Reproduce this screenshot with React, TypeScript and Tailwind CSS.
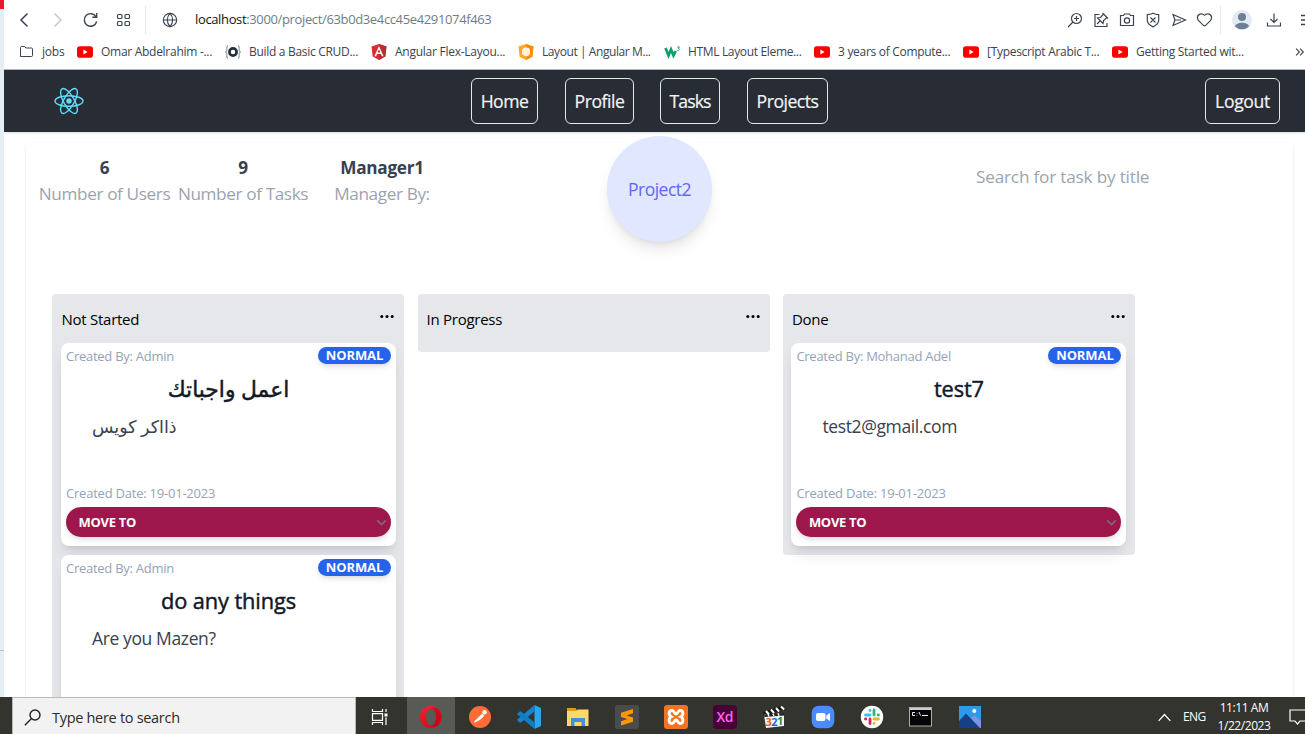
import type { ReactNode } from "react";
import { Heart, Globe } from "lucide-react";

function Line({ children, size = 18, w = 1.2, color = "#3b4450" }: { children: ReactNode; size?: number; w?: number; color?: string }) {
  return (
    <svg width={size} height={size} viewBox="0 0 18 18" fill="none" stroke={color} strokeWidth={w} className="shrink-0">
      {children}
    </svg>
  );
}

function YouTube() {
  return (
    <svg width="16" height="16" viewBox="0 0 16 16">
      <rect y="2.3" width="16" height="11.4" rx="2.8" fill="#f00" />
      <path d="M6.4 5.6v4.8l4.2-2.4z" fill="#fff" />
    </svg>
  );
}

function Folder() {
  return (
    <svg width="13" height="12" viewBox="0 0 13 12" fill="none" stroke="#3b4450">
      <path d="M.5 10.500V1.500c0-.6.4-1 1-1h3.200l1.300 1.500h5.500c.6 0 1 .4 1 1v6.500c0 .6-.4 1-1 1z" />
    </svg>
  );
}

function Loopback() {
  return (
    <svg width="16" height="16" viewBox="0 0 16 16" fill="none">
      <path d="M3 1.500C1.500 1.500 2 4 1.800 6c0 1.300-.6 2-1.500 2 .9 0 1.500.7 1.500 2 .2 2-.3 4.500 1.200 4.500M13 1.500c1.500 0 1 2.500 1.200 4.500 0 1.300.6 2 1.500 2-.9 0-1.500.7-1.500 2-.2 2 .3 4.500-1.200 4.500" stroke="#7b8791" strokeWidth="1" />
      <circle cx="8" cy="8" r="3.600" stroke="#22303c" strokeWidth="2.700" />
    </svg>
  );
}

function Angular() {
  return (
    <svg width="16" height="16" viewBox="0 0 16 16">
      <path d="M8 0l7.500 2.600-1.200 10L8 16l-6.300-3.400-1.200-10z" fill="#dd2b35" />
      <path d="M8 0l7.500 2.600-1.200 10L8 16z" fill="#b52e31" />
      <path d="M8 2l4.600 10.200h-1.700l-.9-2.300H6l-.9 2.300H3.400zm0 3.200L6.600 8.500h2.800z" fill="#fff" />
    </svg>
  );
}

function Material() {
  return (
    <svg width="16" height="16" viewBox="0 0 16 16">
      <path d="M8 0l7.500 2.500-1.100 10.300L8 16l-6.400-3.200L.5 2.500z" fill="#ffa726" />
      <path d="M8 0l7.500 2.500-1.100 10.300L8 16z" fill="#fb8c00" />
      <path d="M8 3.200l3 1L12 6v4l-2 2-2 .500-3-1.500-1-1V6l1.500-2z" fill="#fff3df" />
    </svg>
  );
}

function W3() {
  return (
    <svg width="17" height="16" viewBox="0 0 17 16" fill="none">
      <path d="M1.500 4l3 7.500L7 5.500l2.500 6 2.200-4.500" stroke="#0f9d6c" strokeWidth="2.700" />
      <path d="M13 3h2.500l-1.300 1.500c2 0 1.500 2.500-.9 1.800" stroke="#0f9d6c" strokeWidth=".9" />
    </svg>
  );
}

const bookmarks: { icon: ReactNode; label: string; cls: string; ls: string }[] = [
  { icon: <Folder />, label: "jobs", cls: "w-[57px] gap-[9px]", ls: "tracking-[-0.200px]" },
  { icon: <YouTube />, label: "Omar Abdelrahim -...", cls: "w-[148px] gap-2", ls: "tracking-[-0.280px]" },
  { icon: <Loopback />, label: "Build a Basic CRUD...", cls: "w-[146px] gap-2", ls: "tracking-[-0.300px]" },
  { icon: <Angular />, label: "Angular Flex-Layou...", cls: "w-[147px] gap-2", ls: "tracking-[-0.260px]" },
  { icon: <Material />, label: "Layout | Angular M...", cls: "w-[146px] gap-2", ls: "tracking-[-0.420px]" },
  { icon: <W3 />, label: "HTML Layout Eleme...", cls: "w-[150px] gap-[7px]", ls: "tracking-[-0.340px]" },
  { icon: <YouTube />, label: "3 years of Compute...", cls: "w-[149px] gap-2", ls: "tracking-[-0.300px]" },
  { icon: <YouTube />, label: "[Typescript Arabic T...", cls: "w-[149px] gap-2", ls: "tracking-[-0.300px]" },
  { icon: <YouTube />, label: "Getting Started wit...", cls: "w-[183px] gap-2", ls: "tracking-[-0.280px]" },
];

function AddressBar() {
  return (
    <div className="flex h-[38px] shrink-0 items-center pl-[11px] pt-px">
      <div className="flex w-[122px] shrink-0 items-center gap-[15px]">
        <Line w={1.500}><path d="M12.500 2.500L6 9l6.500 6.500" /></Line>
        <Line w={1.500} color="#c5c8cb"><path d="M6.500 2.500L13 9l-6.500 6.500" /></Line>
        <Line w={1.400}><path d="M15.200 6A6.300 6.300 0 1 0 15.700 10.500M15.700 2v4.300h-4.300" /></Line>
        <Line w={1.200}>
          <rect x="3.500" y="3.500" width="4.500" height="4" rx="1" />
          <rect x="11" y="3.500" width="4.500" height="4" rx="1" />
          <rect x="3.500" y="10.500" width="4.500" height="4" rx="1" />
          <rect x="11" y="10.500" width="4.500" height="4" rx="1" />
        </Line>
      </div>
      <div className="ml-[8px] h-7 w-px shrink-0 bg-[#e4e6e8]" />
      <Globe size={16} strokeWidth={1.700} className="ml-[16px] shrink-0 text-[#3b4450]" />
      <div className="ml-[17px] w-[871px] shrink-0 whitespace-nowrap text-[13px] tracking-[-0.360px] text-[#6f7c89]">
        <span className="text-[#111]">localhost</span>:3000/project/63b0d3e4cc45e4291074f463
      </div>
      <div className="flex shrink-0 items-center gap-[8px]">
        <Line><circle cx="10.500" cy="7.500" r="5" /><path d="M10.500 5v5M8 7.500h5M7 11l-5 5" /></Line>
        <Line><path d="M7.500 3.500H3v12h12V12M10.500 2l5.500 5.500M11.500 3L8.500 6.500l-3 .5 5.500 5.500.5-3L15 6.500M8 10l-3 3" /></Line>
        <Line><path d="M2.500 4.500h3l1-1.500h5l1 1.500h3v10h-13z" /><circle cx="9" cy="9.500" r="2.600" /></Line>
        <Line><path d="M9 2.300c2 1.200 4 1.400 5.700 1.400v5.800c0 3-3 5-5.700 6.400C6.300 14.500 3.300 12.500 3.300 9.500V3.700C5 3.700 7 3.500 9 2.300zM6.500 6.500l5 5M11.500 6.500l-5 5" /></Line>
        <Line><path d="M3 3.500L15.500 9 3 14.500 5 9zM5 9h6" /></Line>
        <Heart size={17} strokeWidth={1.700} className="text-[#3b4450]" />
      </div>
      <div className="ml-[7px] h-7 w-px shrink-0 bg-[#e4e6e8]" />
      <svg width="20" height="20" viewBox="0 0 20 20" className="ml-[11px] shrink-0">
        <circle cx="10" cy="10" r="10" fill="#e2ebf3" />
        <circle cx="10" cy="7" r="4" fill="#6d7f94" />
        <path d="M3 16.500c1-5 13-5 14 0A10 10 0 0 1 3 16.500z" fill="#6d7f94" />
      </svg>
      <div className="ml-[13px] flex shrink-0 gap-[16px]">
        <Line><path d="M9 2.500v9M5.500 8L9 11.500 12.500 8M2.500 11.500v3.500h13v-3.500" /></Line>
        <Line w={1.500}><path d="M2 4.500h13M2 9h13M2 13.500h13" /></Line>
      </div>
    </div>
  );
}

function BookmarkBar() {
  return (
    <div className="flex h-[32px] shrink-0 items-center border-b border-[#b3bac0] pb-[3px] pl-[16px] pr-px text-[12px] text-[#3b4450]">
      {bookmarks.map((b) => (
        <div key={b.label} className={`flex shrink-0 items-center whitespace-nowrap ${b.cls}`}>
          {b.icon}
          <span className={b.ls}>{b.label}</span>
        </div>
      ))}
      <Line size={10} w={2}><path d="M2 3l6 6-6 6M9 3l6 6-6 6" /></Line>
    </div>
  );
}

function NavButton({ label, cls }: { label: string; cls: string }) {
  return (
    <button className={`h-[46px] shrink-0 whitespace-nowrap rounded-[6px] border border-[#e5e7eb] pt-px text-center text-[17.600px] font-medium text-[#f3f4f6] [-webkit-text-stroke:0.200px_#f3f4f6] ${cls}`}>
      {label}
    </button>
  );
}

function Navbar() {
  return (
    <nav className="z-10 flex h-[62px] shrink-0 items-center bg-[#282c34] pl-[50px] shadow-sm">
      <svg width="30" height="28" viewBox="0 0 30 28" fill="none" stroke="#61dafb" strokeWidth="1.400">
        <circle cx="15" cy="14" r="2.700" fill="#61dafb" stroke="none" />
        <ellipse cx="15" cy="14" rx="14" ry="5.300" />
        <ellipse cx="15" cy="14" rx="14" ry="5.300" transform="rotate(60 15 14)" />
        <ellipse cx="15" cy="14" rx="14" ry="5.300" transform="rotate(120 15 14)" />
      </svg>
      <NavButton label="Home" cls="ml-[387px] w-[67px] tracking-[-0.500px]" />
      <NavButton label="Profile" cls="ml-[27px] w-[69px] tracking-[-0.450px]" />
      <NavButton label="Tasks" cls="ml-[26px] w-[60px] tracking-[-0.850px]" />
      <NavButton label="Projects" cls="ml-[27px] w-[81px] tracking-[-0.500px]" />
      <NavButton label="Logout" cls="ml-[377px] w-[75px] tracking-[-0.350px]" />
    </nav>
  );
}

function Stat({ value, label, cls }: { value: string; label: string; cls: string }) {
  return (
    <div className={`shrink-0 whitespace-nowrap text-center text-[17.200px] leading-[26px] ${cls}`}>
      <div className="font-bold tracking-[-0.300px] text-[#374151]">{value}</div>
      <div className="tracking-[-0.390px] text-[#9ca3af]">{label}</div>
    </div>
  );
}

function TaskCard({ by, title, text, date }: { by: string; title: string; text: string; date?: string }) {
  return (
    <div className="h-[203px] w-[335px] shrink-0 rounded-lg bg-white px-[5px] pt-1 shadow-lg">
      <div className="flex h-[19px] justify-between text-[13px] leading-[19px] tracking-[-0.270px] text-[#94a3b8]">
        <span>{by}</span>
        <span className="h-[17px] w-[73px] rounded-full bg-[#2563eb] text-center font-bold leading-[17px] tracking-[-0.100px] text-[#f9fafb] shadow-md">NORMAL</span>
      </div>
      <div className="mt-[6px] h-[34px] text-center text-[21.800px] leading-[34px] tracking-[-0.120px] text-[#111827] [-webkit-text-stroke:0.450px_#111827]">{title}</div>
      <div className="mt-[5px] h-[74px] pl-[26px] text-[17.500px] leading-[30px] tracking-[-0.380px] text-[#374151]">{text}</div>
      {date && (
        <>
          <div className="text-[13px] leading-[16px] tracking-[-0.220px] text-[#94a3b8]">Created Date: {date}</div>
          <div className="mt-[6px] flex h-[30px] items-center justify-between rounded-full bg-[#9d174d] pl-[12.500px] pr-[4px] text-[13px] font-bold tracking-[-0.300px] text-white shadow-md">
            <span className="pt-px">MOVE TO</span>
            <Line size={11} w={2.600} color="#806a74"><path d="M2 5.500l7 7 7-7" /></Line>
          </div>
        </>
      )}
    </div>
  );
}

function Column({ title, cls, children }: { title: string; cls: string; children?: ReactNode }) {
  return (
    <section className={`flex w-[352px] shrink-0 flex-col gap-[9px] rounded bg-[#e5e7eb] ${cls}`}>
      <header className="flex h-10 shrink-0 justify-between pr-[10px] pt-[9px]">
        <h2 className="pl-[0.500px] text-[15px] leading-[32px] tracking-[-0.260px] text-black">{title}</h2>
        <svg width="14" height="4" viewBox="0 0 14 4" className="mt-[11px]">
          <circle cx="1.800" cy="2.500" r="1.500" />
          <circle cx="7" cy="2.500" r="1.500" />
          <circle cx="12.200" cy="2.500" r="1.500" />
        </svg>
      </header>
      {children}
    </section>
  );
}

function Board() {
  return (
    <main className="ml-[22px] mt-[11px] flex h-[554px] w-[1267px] shrink-0 flex-col rounded-t bg-white shadow">
      <div className="flex h-[151px] shrink-0">
        <Stat value="6" label="Number of Users" cls="ml-[12px] mt-[12px] w-[133px]" />
        <Stat value="9" label="Number of Tasks" cls="ml-[6px] mt-[12px] w-[132px]" />
        <Stat value="Manager1" label="Manager By:" cls="ml-[23px] mt-[12px] w-[100px]" />
        <div className="ml-[175px] mt-[-7px] flex h-[106px] w-[105px] shrink-0 items-center justify-center rounded-full bg-[#e0e7ff] text-[17.500px] tracking-[-0.500px] text-[#6366f1] shadow-lg">
          <span>Project2</span>
        </div>
        <input
          aria-label="Search"
          placeholder="Search for task by title"
          className="ml-[264px] mt-[19px] h-[28px] w-[190px] text-[17.200px] tracking-[-0.200px] outline-none placeholder:text-[#9ca3af]"
        />
      </div>
      <div className="flex items-start pl-[26px]">
        <Column title="Not Started" cls="mr-[14px] h-[403px] overflow-hidden rounded-b-none pl-[9px]">
          <TaskCard by="Created By: Admin" title="اعمل واجباتك" text="ذااكر كويس" date="19-01-2023" />
          <TaskCard by="Created By: Admin" title="do any things" text="Are you Mazen?" />
        </Column>
        <Column title="In Progress" cls="mr-[13px] h-[58px] pl-[8px]" />
        <Column title="Done" cls="h-[261px] pl-[8.400px]">
          <TaskCard by="Created By: Mohanad Adel" title="test7" text="test2@gmail.com" date="19-01-2023" />
        </Column>
      </div>
    </main>
  );
}

function AppIcon({ children }: { children: ReactNode }) {
  return (
    <div className="flex h-full w-[49px] shrink-0 items-center pl-[12px] pt-[3px]">
      <svg width="24" height="24" viewBox="0 0 24 24" fill="none">
        {children}
      </svg>
    </div>
  );
}

function TaskbarApps() {
  return (
    <div className="flex h-full shrink-0">
      <div className="mr-px h-full w-[48px] shrink-0 bg-[#585a55]">
        <AppIcon>
          <defs>
            <linearGradient id="opera" x1="0" y1="0" x2="0" y2="1">
              <stop stopColor="#ff1b2d" />
              <stop offset="1" stopColor="#d4101f" />
            </linearGradient>
          </defs>
          <path fillRule="evenodd" d="M12 1C5.500 1 1 6 1 12s4.500 11 11 11 11-5 11-11S18.500 1 12 1zm0 2.500c3 0 5 3.500 5 8.500s-2 8.500-5 8.500S7 17 7 12s2-8.500 5-8.500z" fill="url(#opera)" />
          <path d="M12 3.500c1.300-1.200 4.500-1.500 6.500 0C24 8 24 16 18.500 20.500c-2 1.500-5.200 1.200-6.500 0 3 0 5-3.500 5-8.500s-2-8.500-5-8.500z" fill="#a70014" opacity=".5" />
        </AppIcon>
      </div>
      <AppIcon>
        <circle cx="12" cy="12" r="11" fill="#ff6c37" />
        <path d="M6 17.500l7.500-7.500 2-.5.5 1.500-4 4z" fill="#fff" />
        <path d="M6.500 17.200l8-8" stroke="#fff" strokeWidth="1.500" />
        <circle cx="16.500" cy="7.300" r="2.200" fill="#fff" />
      </AppIcon>
      <AppIcon>
        <path d="M17.500 0L24 3v18l-6.500 3V0z" fill="#2aa5ee" />
        <path d="M17.500 0v6.500L4 17.500l-1 .2L.3 15.500v-1L17.500 0z" fill="#1583cc" />
        <path d="M17.500 24v-6.500L4 6.500l-1-.2L.3 8.500v1L17.500 24z" fill="#0f7cc5" />
      </AppIcon>
      <AppIcon>
        <path d="M1 3h8.500l1.500 2h11v5H1z" fill="#d9a013" />
        <path d="M1 6h9.500l1.500-1.500h10.500V21H1z" fill="#ffd869" />
        <path d="M5 13h14v8h-3.500v-4h-7v4H5z" fill="#3c91e0" />
      </AppIcon>
      <AppIcon>
        <rect width="24" height="24" rx="2" fill="#4b4b4b" />
        <path d="M18 4v4.300L11.500 10.500 18 12.500v4.200L6 20.500v-4.300l6.500-2.100L6 12V7.800z" fill="#ff9800" />
      </AppIcon>
      <AppIcon>
        <rect width="24" height="24" rx="3" fill="#f27321" />
        <path d="M8 5.500C4.800 5.500 4 9.300 7 11.700 4 14 4.800 18.500 8 18.500c2.500 0 2-3.500 4-3.500s1.500 3.500 4 3.500c3.200 0 4-4.500 1-6.800 3-2.400 2.200-6.200-1-6.200-2.500 0-2 3.500-4 3.500s-1.500-3.500-4-3.500z" stroke="#fff" strokeWidth="2.900" />
        <path d="M7.500 11.700h2M14.500 11.700h2" stroke="#fff" strokeWidth="1.500" />
      </AppIcon>
      <AppIcon>
        <rect width="24" height="24" rx="4" fill="#470137" />
        <text x="12" y="17" textAnchor="middle" fontSize="14" fontWeight="600" fill="#ff61f6" fontFamily="Open Sans, sans-serif" textLength="17">Xd</text>
      </AppIcon>
      <AppIcon>
        <path d="M1 7L20.500.8l1.200 4L2 11z" fill="#151515" />
        <path d="M4 6l3 3.500M9 4.500l3 3.500M14 3l3 3.500M19 1.500l3 3" stroke="#fff" strokeWidth="2" />
        <path d="M2 9.500l20-1V21L4 23z" fill="#f7f7f7" />
        <path d="M2 9.500l20-1.500v2.500L2.500 12z" fill="#202020" />
        <path d="M6 9l1 2.500M11 8.700l1 2.500M16 8.300l1 2.500" stroke="#fff" strokeWidth="1.500" />
        <g fontSize="11" fontWeight="700" fontFamily="Open Sans, sans-serif">
          <text x="3.500" y="21.300" fill="#e85d16">3</text>
          <text x="9.300" y="20.800" fill="#2866c8">2</text>
          <text x="15" y="20.300" fill="#22913b">1</text>
        </g>
      </AppIcon>
      <AppIcon>
        <rect x=".7" y=".7" width="22.600" height="22.600" rx="7" fill="#4a8cff" />
        <rect x="5" y="8" width="9.500" height="8" rx="2" fill="#fff" />
        <path d="M15.300 10.500L19 8v8l-3.700-2.500z" fill="#fff" />
      </AppIcon>
      <AppIcon>
        <circle cx="12" cy="12" r="11.200" fill="#fff" />
        <g strokeWidth="2.800" strokeLinecap="round">
          <path d="M10 5.300v.2M5.500 10H10" stroke="#36c5f0" />
          <path d="M14 5v5M18.500 10h-.3" stroke="#2eb67d" />
          <path d="M14 14h4.500M14 18.300v.2" stroke="#ecb22e" />
          <path d="M10 14v4.500M5.700 14h-.2" stroke="#e01e5a" />
        </g>
      </AppIcon>
      <AppIcon>
        <rect x=".5" y="2.500" width="22" height="18.500" fill="#050505" stroke="#a9adb0" />
        <path d="M1 4h21" stroke="#c9ced2" strokeWidth="2" />
        <path d="M6 7.500H3.500v3H6M8 8v.5M8 10v.5M10 7l1.500 3.500M13 10.500h6" stroke="#eee" />
      </AppIcon>
      <AppIcon>
        <rect x="1" y="1" width="22" height="22" fill="#2f9ae8" />
        <path d="M11 15l5.500-5L23 16v7H11z" fill="#7d95dd" />
        <path d="M1 16l7-7.500L22 23H1z" fill="#153f86" />
        <circle cx="16.300" cy="6" r="2" fill="#fff" />
      </AppIcon>
    </div>
  );
}

function Taskbar() {
  return (
    <footer className="z-20 flex h-[37px] shrink-0 items-center bg-[#32342d] pl-[12px]">
      <div className="flex h-full w-[344px] shrink-0 items-center border-l border-r border-t border-[#b9b9b9] bg-[#f2f2f2] pl-[11px] pt-[3px]">
        <Line size={18} w={1.400} color="#222"><circle cx="11" cy="6" r="5" /><path d="M7.300 9.700L.8 16.200" /></Line>
        <span className="ml-[10px] text-[14.500px] tracking-[-0.300px] text-[#2b2b2b]">Type here to search</span>
      </div>
      <div className="flex w-[51px] shrink-0 pl-[14px] pt-[2px]">
        <Line color="#fff" w={1.200}><path d="M2.500 1v2.500h10V1M2.500 17v-2.500h10V17M2.500 5.700h10v6.600h-10zM16 1v3M16 9.500V17" /><path d="M14.500 5.500h3v3h-3z" fill="#fff" stroke="none" /></Line>
      </div>
      <TaskbarApps />
      <div className="ml-[162px] flex shrink-0 items-center pt-[3px] text-[12px] text-white">
        <Line size={15} w={1.600} color="#fff"><path d="M2 13l7-7.500 7 7.500" /></Line>
        <span className="ml-[11px] w-[23px] tracking-[-0.600px]">ENG</span>
        <div className="ml-[10px] w-[56px] whitespace-nowrap text-center leading-[18px] tracking-[-0.430px]">
          <div>11:11 AM</div>
          <div>1/22/2023</div>
        </div>
        <svg width="18" height="18" viewBox="0 0 18 18" fill="none" stroke="#fff" strokeWidth="1.200" className="ml-[17px] shrink-0">
          <path d="M1 2h16v11h-6l-2.500 3L6 13H1z" />
        </svg>
      </div>
    </footer>
  );
}

export default function App() {
  return (
    <div className="flex h-[734px] w-[1305px] flex-col overflow-hidden bg-white font-['Open_Sans','Noto_Sans','DejaVu_Sans',sans-serif]">
      <div className="flex h-[697px] shrink-0 overflow-hidden">
        <div className="flex w-1 shrink-0 flex-col bg-[#e6eef5]">
          <div className="h-[9px] bg-[#f0142c]" />
          <div className="mt-[641px] h-px bg-[#b5c2cf]" />
        </div>
        <div className="flex w-[1301px] flex-col overflow-hidden">
          <AddressBar />
          <BookmarkBar />
          <Navbar />
          <Board />
        </div>
      </div>
      <Taskbar />
    </div>
  );
}
